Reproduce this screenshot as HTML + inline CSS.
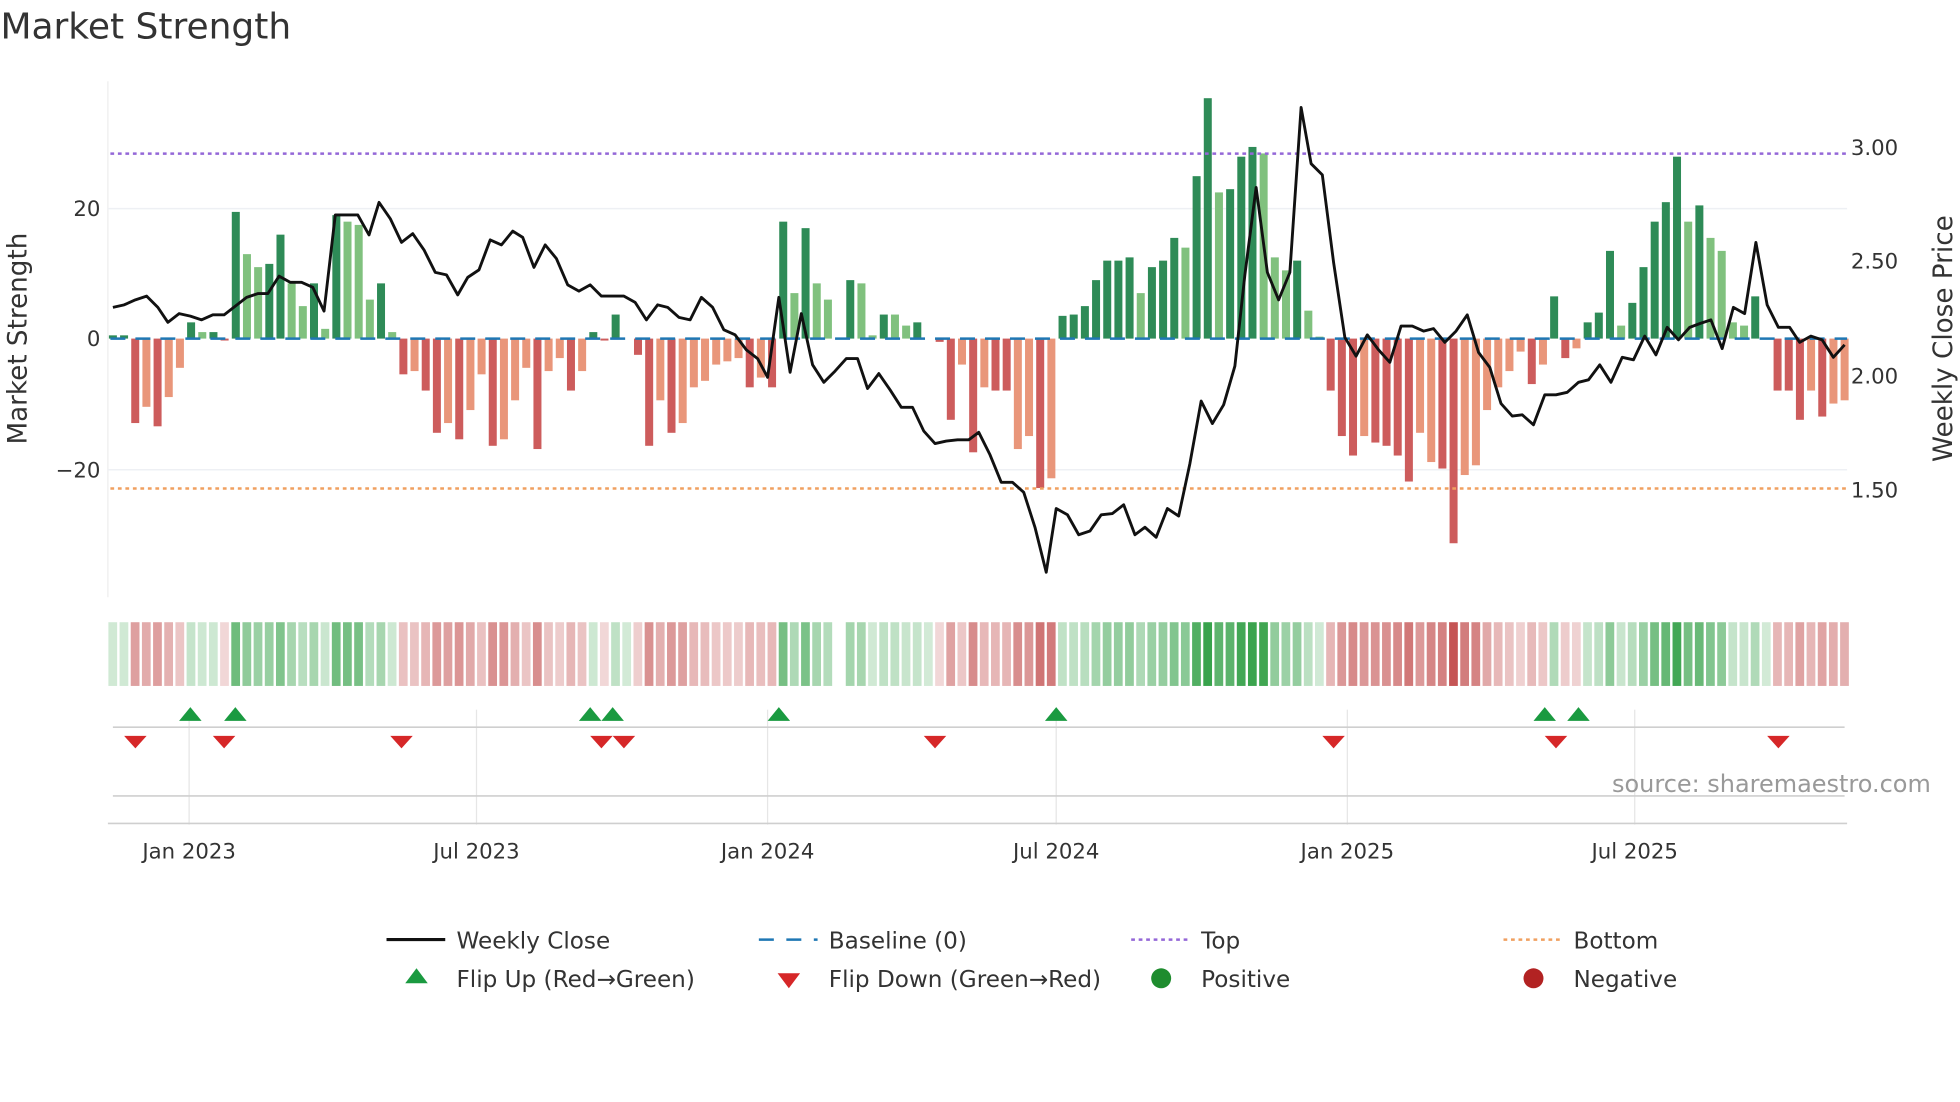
<!DOCTYPE html>
<html><head><meta charset="utf-8"><style>
html,body{margin:0;padding:0;background:#fff;}
svg{display:block;font-family:"DejaVu Sans","Liberation Sans",sans-serif;}
</style></head><body>
<svg id="s" width="1960" height="1102" viewBox="0 0 1568 882" xmlns="http://www.w3.org/2000/svg">
<rect width="1568" height="882" fill="#fff"/>
<text x="0" y="31" font-size="28.8" fill="#333">Market Strength</text>
<line x1="86" y1="65" x2="86" y2="478" stroke="#eee" stroke-width="1"/>
<line x1="86" y1="167" x2="1478" y2="167" stroke="#eef0f4" stroke-width="1.2"/>
<line x1="86" y1="376" x2="1478" y2="376" stroke="#eef0f4" stroke-width="1.2"/>
<g id="bars"></g>
<g id="strip"></g>
<line x1="88" y1="271" x2="1478" y2="271" stroke="#1f77b4" stroke-width="2" stroke-dasharray="12,8"/>
<line x1="88" y1="123" x2="1478" y2="123" stroke="#9467d8" stroke-width="2" stroke-dasharray="3,3"/>
<line x1="88" y1="391" x2="1478" y2="391" stroke="#f0a060" stroke-width="2" stroke-dasharray="3,3"/>
<polyline id="price" fill="none" stroke="#111" stroke-width="2.3" stroke-linejoin="round"/>
<g font-size="17" fill="#333">
<text x="80" y="173" text-anchor="end">20</text>
<text x="80" y="277" text-anchor="end">0</text>
<text x="80" y="382" text-anchor="end">−20</text>
<text x="1481" y="124">3.00</text>
<text x="1481" y="215">2.50</text>
<text x="1481" y="307">2.00</text>
<text x="1481" y="398">1.50</text>
</g>
<text transform="translate(21,271) rotate(-90)" font-size="21" fill="#333" text-anchor="middle">Market Strength</text>
<text transform="translate(1562,271) rotate(-90)" font-size="21" fill="#333" text-anchor="middle">Weekly Close Price</text>
<g stroke="#e6e6e6" stroke-width="1">
<line x1="151" y1="568" x2="151" y2="660"/><line x1="381" y1="568" x2="381" y2="660"/>
<line x1="614" y1="568" x2="614" y2="660"/><line x1="845" y1="568" x2="845" y2="660"/>
<line x1="1078" y1="568" x2="1078" y2="660"/><line x1="1308" y1="568" x2="1308" y2="660"/>
</g>
<line x1="90" y1="582" x2="1476" y2="582" stroke="#cfcfcf" stroke-width="1.3"/>
<line x1="90" y1="637" x2="1476" y2="637" stroke="#cfcfcf" stroke-width="1.3"/>
<line x1="86" y1="659" x2="1478" y2="659" stroke="#cfcfcf" stroke-width="1.3"/>
<g id="marks"></g>
<text x="1545" y="634" font-size="19.2" fill="#999" text-anchor="end">source: sharemaestro.com</text>
<g font-size="17" fill="#333" text-anchor="middle">
<text x="151" y="687">Jan 2023</text><text x="381" y="687">Jul 2023</text>
<text x="614" y="687">Jan 2024</text><text x="845" y="687">Jul 2024</text>
<text x="1078" y="687">Jan 2025</text><text x="1308" y="687">Jul 2025</text>
</g>
<g font-size="18.5" fill="#333">
<line x1="309" y1="752" x2="356" y2="752" stroke="#111" stroke-width="2.5"/>
<text x="365" y="759">Weekly Close</text>
<line x1="607" y1="752" x2="654" y2="752" stroke="#1f77b4" stroke-width="2" stroke-dasharray="12,10"/>
<text x="663" y="759">Baseline (0)</text>
<line x1="905" y1="752" x2="952" y2="752" stroke="#9467d8" stroke-width="2" stroke-dasharray="3,3"/>
<text x="961" y="759">Top</text>
<line x1="1203" y1="752" x2="1250" y2="752" stroke="#f0a060" stroke-width="2" stroke-dasharray="3,3"/>
<text x="1259" y="759">Bottom</text>
<polygon points="324,787 342,787 333,775" fill="#1a9a40"/>
<text x="365" y="790">Flip Up (Red→Green)</text>
<polygon points="622,779 640,779 631,791" fill="#d62728"/>
<text x="663" y="790">Flip Down (Green→Red)</text>
<circle cx="929" cy="783" r="8" fill="#1e8c2e"/>
<text x="961" y="790">Positive</text>
<circle cx="1227" cy="783" r="8" fill="#b22222"/>
<text x="1259" y="790">Negative</text>
</g>
</svg>
<script>
var V=[[0.5,1],[0.5,1],[-13,1],[-10.5,0],[-13.5,1],[-9,0],[-4.5,0],[2.5,1],[1,0],[1,1],[-0.3,1],[19.5,1],[13,0],[11,0],[11.5,1],[16,1],[8.5,0],[5,0],[8.5,1],[1.5,0],[19,1],[18,0],[17.5,0],[6,0],[8.5,1],[1,0],[-5.5,1],[-5,0],[-8,1],[-14.5,1],[-13,0],[-15.5,1],[-11,0],[-5.5,0],[-16.5,1],[-15.5,0],[-9.5,0],[-4.5,0],[-17,1],[-5,0],[-3,0],[-8,1],[-5,0],[1,1],[-0.3,1],[3.7,1],[0,0],[-2.5,1],[-16.5,1],[-9.5,0],[-14.5,1],[-13,0],[-7.5,0],[-6.5,0],[-4,0],[-3.5,0],[-3,0],[-7.5,1],[-6,0],[-7.5,1],[18,1],[7,0],[17,1],[8.5,0],[6,0],[0,0],[9,1],[8.5,0],[0.5,0],[3.7,1],[3.7,0],[2,0],[2.5,1],[0,0],[-0.5,1],[-12.5,1],[-4,0],[-17.5,1],[-7.5,0],[-8,1],[-8,1],[-17,0],[-15,0],[-23,1],[-21.5,0],[3.5,1],[3.7,1],[5,1],[9,1],[12,1],[12,1],[12.5,1],[7,0],[11,1],[12,1],[15.5,1],[14,0],[25,1],[37,1],[22.5,0],[23,1],[28,1],[29.5,1],[28.5,0],[12.5,0],[10.5,0],[12,1],[4.3,0],[0.3,0],[-8,1],[-15,1],[-18,1],[-15,0],[-16,1],[-16.5,1],[-18,1],[-22,1],[-14.5,0],[-19,0],[-20,1],[-31.5,1],[-21,0],[-19.5,0],[-11,0],[-7.5,0],[-5,0],[-2,0],[-7,1],[-4,0],[6.5,1],[-3,1],[-1.5,0],[2.5,1],[4,1],[13.5,1],[2,0],[5.5,1],[11,1],[18,1],[21,1],[28,1],[18,0],[20.5,1],[15.5,0],[13.5,0],[2.5,0],[2,0],[6.5,1],[0,0],[-8,1],[-8,1],[-12.5,1],[-8,0],[-12,1],[-10,0],[-9.5,0]];
var ns="http://www.w3.org/2000/svg",n=V.length,st=(1476-90)/(n-1);
function el(t,a,p){var e=document.createElementNS(ns,t);for(var k in a)e.setAttribute(k,a[k]);document.getElementById(p).appendChild(e);return e;}
for(var i=0;i<n;i++){var v=V[i][0],d=V[i][1],cx=90+i*st,h=Math.abs(v)*5.2;
 var c=v>=0?(d?'#2e8b57':'#80c17e'):(d?'#cd5c5c':'#e9967a');
 if(h>0.3)el('rect',{x:cx-3.2,y:v>=0?271-h:271,width:6.4,height:h,fill:c},'bars');
 if(i==65)continue;
 var m=Math.min(Math.abs(v)/30,1),a=0.22+m*0.75;
 var col=v>=0?'rgba(50,160,70,'+a+')':'rgba(195,80,80,'+a+')';
 el('rect',{x:cx-3.6,y:498,width:7,height:51,fill:col},'strip');}
var P="90,246 99,244 108,240 117,237 126,246 134,258 143,251 152,253 161,256 170,252 179,252 188,245 197,238 206,235 214,235 223,221 232,226 241,226 250,230 259,249 268,172 277,172 286,172 295,188 303,162 312,175 321,194 330,187 339,200 348,218 357,220 366,236 374,222 383,216 392,192 401,196 410,185 418,190 427,214 436,196 445,207 454,228 463,233 472,228 481,237 490,237 499,237 508,242 517,256 526,244 534,246 543,254 552,256 561,238 570,246 579,264 588,268 597,280 606,287 614,302 623,238 632,298 641,251 650,292 659,306 668,297 677,287 686,287 694,311 703,299 712,312 721,326 730,326 739,345 748,355 757,353 766,352 775,352 783,346 792,364 801,386 810,386 819,394 828,422 837,458 845,407 854,412 863,428 872,425 881,412 890,411 899,404 908,428 916,422 925,430 934,407 943,413 952,371 961,321 970,339 979,324 988,293 996,220 1005,150 1014,218 1023,240 1032,218 1041,86 1049,131 1058,140 1067,210 1076,270 1085,285 1094,268 1103,280 1112,290 1121,261 1130,261 1139,265 1147,263 1156,274 1165,265 1174,252 1183,282 1192,294 1201,323 1210,333 1218,332 1227,340 1236,316 1245,316 1254,314 1263,306 1271,304 1280,292 1289,306 1298,286 1307,288 1316,269 1325,284 1334,262 1343,272 1352,262 1360,259 1369,256 1378,279 1387,246 1396,251 1405,194 1414,244 1423,262 1432,262 1440,274 1449,269 1458,272 1467,286 1476,276";
document.getElementById('price').setAttribute('points',P);
[152,188,472,490,623,845,1236,1263].forEach(function(x){el('polygon',{points:(x-9)+',577 '+(x+9)+',577 '+x+',566',fill:'#1a9a40'},'marks');});
[108,179,321,481,499,748,1067,1245,1423].forEach(function(x){el('polygon',{points:(x-9)+',589 '+(x+9)+',589 '+x+',599',fill:'#d62728'},'marks');});
</script>
</body></html>
